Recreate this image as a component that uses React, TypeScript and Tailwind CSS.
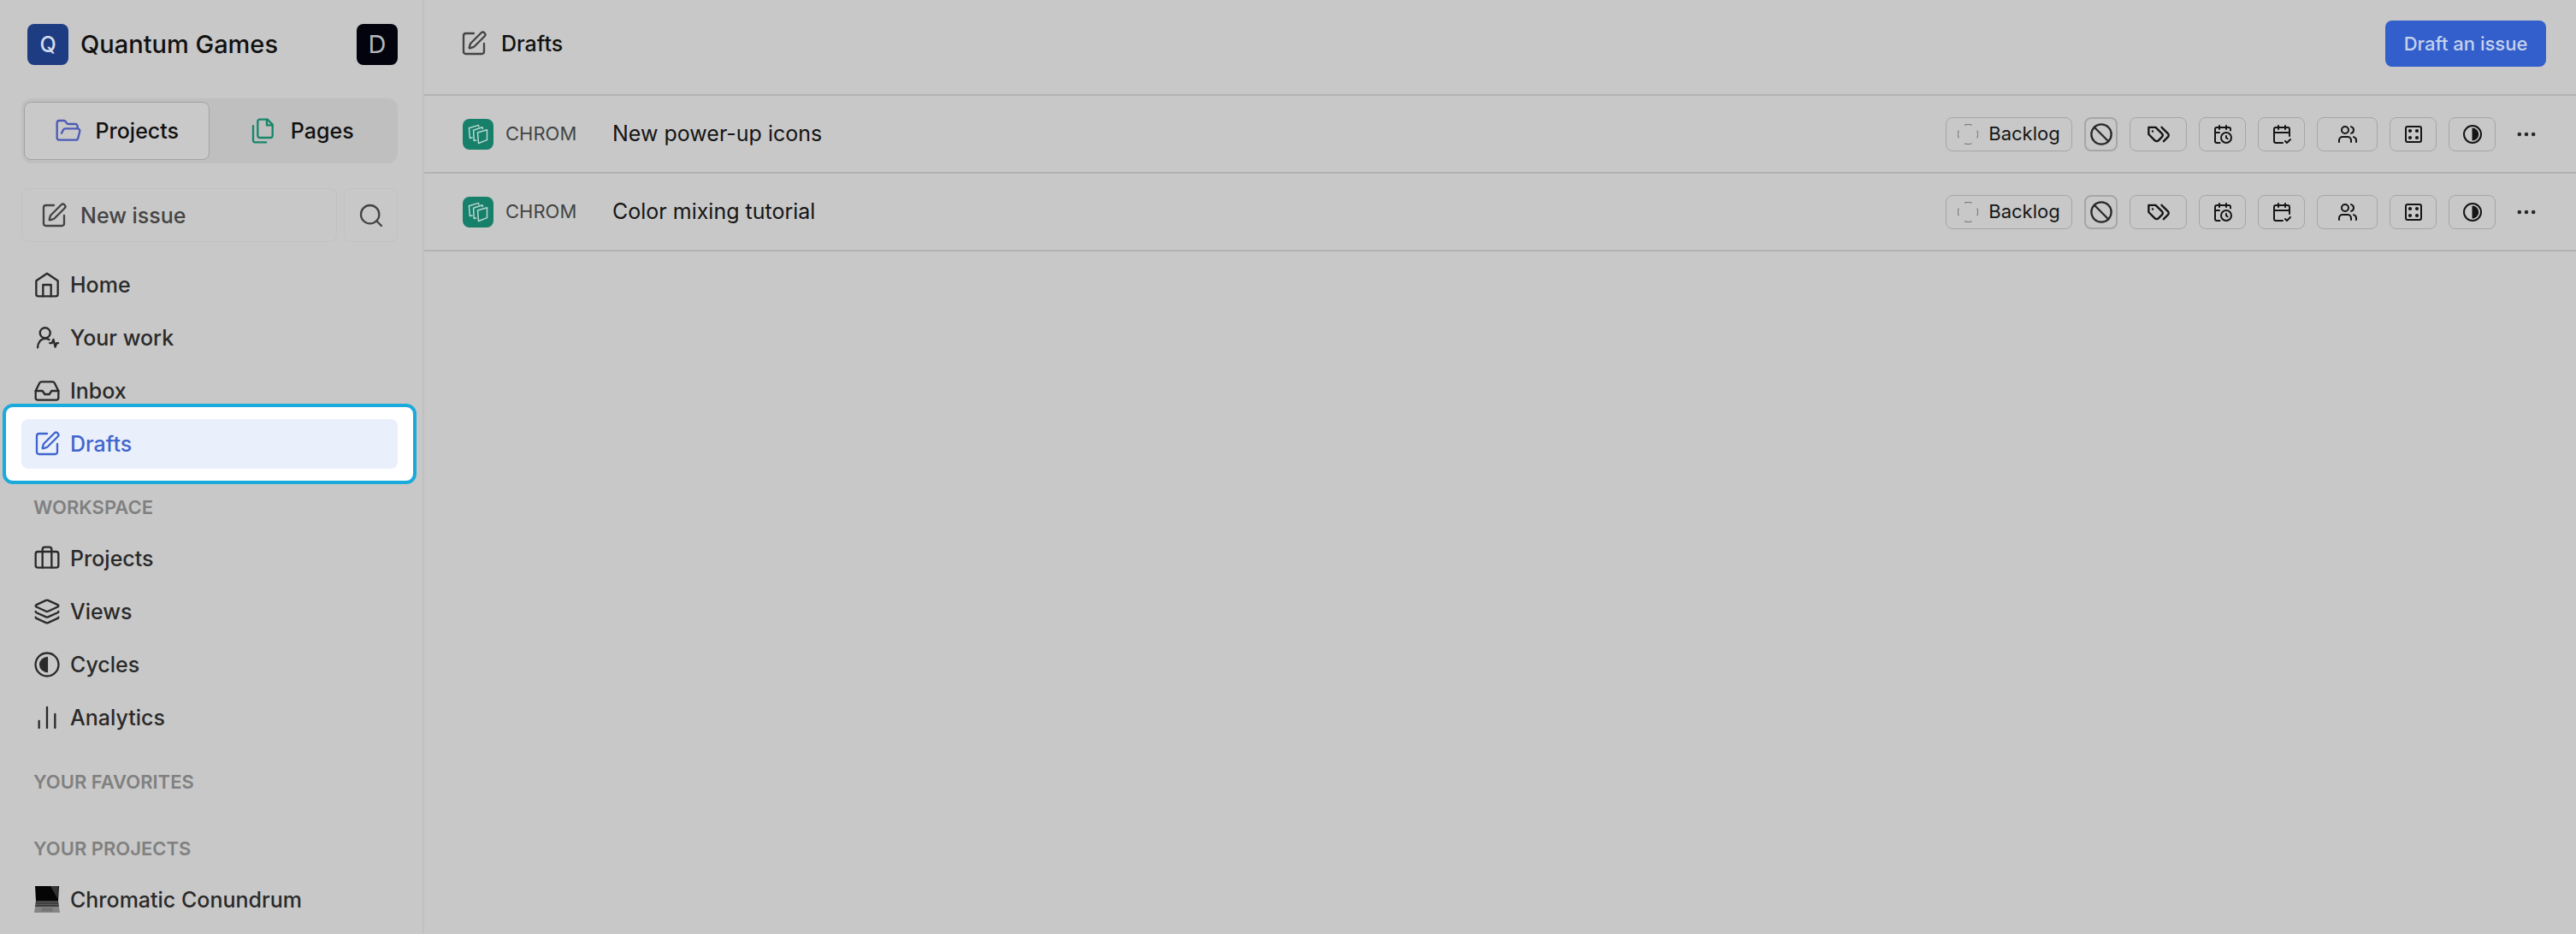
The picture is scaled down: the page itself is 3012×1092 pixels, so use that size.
import type { ReactNode } from 'react';
import {
  Ban,
  Briefcase,
  CalendarCheck2,
  CalendarClock,
  ChartNoAxesColumn,
  Ellipsis,
  FolderOpen,
  Inbox,
  Layers,
  Search,
  SquarePen,
  Users,
} from 'lucide-react';

const strokeProps = {
  viewBox: '0 0 24 24',
  fill: 'none',
  stroke: 'currentColor',
  strokeLinecap: 'round' as const,
  strokeLinejoin: 'round' as const,
};

const HomeIcon = () => (
  <svg {...strokeProps} strokeWidth={1.75} className="size-8">
    <path d="m2.500 8.500 9.500-6.500 9.500 6.500V20a2 2 0 0 1-2 2h-15a2 2 0 0 1-2-2z" />
    <path d="M8.500 22V12h7v10" />
  </svg>
);

const UserActivityIcon = () => (
  <svg {...strokeProps} strokeWidth={1.75} className="size-8">
    <circle cx="10.3" cy="7.7" r="4.500" />
    <path d="M3.800 20.500c0-4 2.600-7.800 6.500-7.800 1.400 0 2.600.3 3.600.9" />
    <path d="M14.400 16.600h1.900l1.300-3.200 1.600 6.600 1.200-3.400h1.400" />
  </svg>
);

const PagesIcon = () => (
  <svg {...strokeProps} strokeWidth={1.75} className="size-8 text-[#17876a]">
    <path d="M15.5 2H8.6c-.4 0-.8.2-1.1.5-.3.3-.5.7-.5 1.1v12.8c0 .4.2.8.5 1.1.3.3.7.5 1.1.5h9.8c.4 0 .8-.2 1.1-.5.3-.3.5-.7.5-1.1V6.5L15.5 2z" />
    <path d="M3 7.6v12.8c0 .4.2.8.5 1.1.3.3.7.5 1.1.5h9.8" />
    <path d="M15 2v5h5" />
  </svg>
);

const CycleIcon = () => (
  <svg {...strokeProps} strokeWidth={1.75} className="size-8">
    <circle cx="12" cy="12" r="10.1" />
    <path d="M12.800 5v14a7.600 7 0 0 1 0-14z" fill="currentColor" stroke="none" />
  </svg>
);

const CycleSmallIcon = () => (
  <svg {...strokeProps} strokeWidth={2} className="size-6">
    <circle cx="12" cy="12" r="10" />
    <path d="M11.500 4.500a7.800 7.500 0 0 1 0 15z" fill="currentColor" stroke="none" />
  </svg>
);

const TagsIcon = () => (
  <svg {...strokeProps} strokeWidth={2} className="size-7">
    <path d="M9 5H2v7l6.290 6.290c.940.940 2.480.940 3.420 0l3.580-3.580c.940-.940.940-2.480 0-3.420L9 5Z" />
    <path d="M6 9.010V9" />
    <path d="m15 5 6.300 6.300a2.400 2.400 0 0 1 0 3.400L17 19" />
  </svg>
);

const ModuleIcon = () => (
  <svg {...strokeProps} strokeWidth={2} className="size-6">
    <rect x="3" y="3" width="18" height="18" rx="2" />
    <g fill="currentColor" stroke="none">
      <circle cx="8" cy="8" r="2.1" />
      <circle cx="16" cy="8" r="2.1" />
      <circle cx="8" cy="16" r="2.1" />
      <circle cx="16" cy="16" r="2.1" />
    </g>
  </svg>
);

const BacklogIcon = () => (
  <svg viewBox="0 0 24 24" fill="none" stroke="#7d7d7d" strokeWidth={1.2} className="size-6">
    <path d="M8 1.200a11.500 11.500 0 0 1 8.600 0M8 22.800a11.500 11.500 0 0 0 8.600 0M1.200 7.700a11.500 11.500 0 0 0 0 8.600M22.800 7.700a11.500 11.500 0 0 1 0 8.600" />
  </svg>
);

const ProjectLogo = () => (
  <span className="flex size-9 shrink-0 items-center justify-center rounded-lg bg-[#17806b]">
    <svg viewBox="0 0 24 24" fill="none" stroke="#b9d8d0" strokeWidth={1.5} strokeLinejoin="round" className="size-6">
      <path d="m11.500 10 11-3.200v11.800l-10 3.900z" />
      <path d="M10.300 18.800 7.200 19.400 6.600 7.200 17 3.800l.5 2.400" />
      <path d="M5.600 15.800 2.400 16.400 1.400 4.800 12.400 1.400l.6 2.200" />
    </svg>
  </span>
);

const LaptopIcon = () => (
  <svg viewBox="0 0 32 32" className="size-8">
    <path d="M2 0h28l-1 17H3z" fill="#050505" />
    <path d="M20 0h9l-.5 15z" fill="#333" />
    <path d="M3 17h26l1 7H2z" fill="#3d3d3d" />
    <path d="M4 19h24M3 21.500h26" stroke="#777" strokeWidth=".8" strokeDasharray="1.5 .7" />
    <path d="M2 24h28l1 7H1z" fill="#858585" />
    <path d="M10 25h12l1 4.500H9z" fill="#757575" />
  </svg>
);

interface NavItem {
  label: string;
  icon: ReactNode;
  active?: boolean;
}

const mainNav: NavItem[] = [
  { label: 'Home', icon: <HomeIcon /> },
  { label: 'Your work', icon: <UserActivityIcon /> },
  { label: 'Inbox', icon: <Inbox className="size-8" strokeWidth={1.75} /> },
  { label: 'Drafts', icon: <SquarePen className="size-8" strokeWidth={1.75} />, active: true },
];

const workspaceNav: NavItem[] = [
  { label: 'Projects', icon: <Briefcase className="size-8" strokeWidth={1.75} /> },
  { label: 'Views', icon: <Layers className="size-8" strokeWidth={1.75} /> },
  { label: 'Cycles', icon: <CycleIcon /> },
  { label: 'Analytics', icon: <ChartNoAxesColumn className="size-8" strokeWidth={1.75} /> },
];

const projectNav: NavItem[] = [{ label: 'Chromatic Conundrum', icon: <LaptopIcon /> }];

const drafts = [
  { id: 1, project: 'CHROM', title: 'New power-up icons' },
  { id: 2, project: 'CHROM', title: 'Color mixing tutorial' },
];

const NavList = ({ items }: { items: NavItem[] }) => (
  <ul className="flex flex-col gap-1">
    {items.map((item) => (
      <li key={item.label} className="relative">
        {/* Spotlight around the current step of the tour */}
        {item.active && (
          <div className="absolute -inset-x-[22px] -inset-y-[18px] rounded-xl border-4 border-[#1aaadb] bg-white" />
        )}
        <a
          href="#"
          className={
            item.active
              ? 'relative flex h-[58px] items-center gap-[11px] rounded-lg bg-[#eaeffc] px-3.5 text-[#3f66cc]'
              : 'flex h-[58px] items-center gap-[11px] rounded-lg px-3.5 text-[#2a2a2a]'
          }
        >
          {item.icon}
          <span>{item.label}</span>
        </a>
      </li>
    ))}
  </ul>
);

const SectionTitle = ({ children }: { children: ReactNode }) => (
  <h2 className="px-3.5 text-[22px] leading-8 font-semibold text-[#808080]">{children}</h2>
);

const Sidebar = () => (
  <aside className="w-[496px] shrink-0 border-r-2 border-[#c0c0c0] pr-[29px] pb-2.5 pl-[25px] text-[25px] leading-9 font-medium">
    <div className="flex items-center gap-3.5 pt-7 pl-[7px]">
      <span className="flex size-12 items-center justify-center rounded-lg bg-[#1e3c82] text-[25px] text-[#d4dcec]">
        Q
      </span>
      <span className="flex-1 text-[29px] text-[#111]">Quantum Games</span>
      <button
        type="button"
        aria-label="Account"
        className="flex size-12 items-center justify-center rounded-lg bg-[#02030c] text-[29px] font-normal text-[#b4b6bc]"
      >
        D
      </button>
    </div>

    <div className="mt-[39px] flex h-[76px] rounded-xl bg-[#bfbfbf] p-1 pl-[3px] text-[#111]">
      <button
        type="button"
        className="flex w-1/2 items-center justify-center gap-4 rounded-lg border border-[#a3a3a3] bg-[#c9c9c9]"
      >
        <FolderOpen className="size-8 text-[#4c5bb8]" strokeWidth={1.75} />
        Projects
      </button>
      <button type="button" className="flex w-1/2 items-center justify-center gap-4">
        <PagesIcon />
        Pages
      </button>
    </div>

    <div className="mt-[29px] flex gap-2 text-[#444]">
      <button
        type="button"
        className="flex h-[63px] flex-1 items-center gap-[15px] rounded-lg border border-[#c2c2c2] px-[21px]"
      >
        <SquarePen className="size-8" strokeWidth={1.75} />
        New issue
      </button>
      <button
        type="button"
        aria-label="Search"
        className="flex size-[63px] items-center justify-center rounded-lg border border-[#c2c2c2]"
      >
        <Search className="size-8" strokeWidth={1.75} />
      </button>
    </div>

    <nav>
      <div className="pt-[21px]">
        <NavList items={mainNav} />
      </div>
      <div className="pt-[29px]">
        <SectionTitle>WORKSPACE</SectionTitle>
        <div className="pt-[15px]">
          <NavList items={workspaceNav} />
        </div>
      </div>
      <div className="pt-[30px]">
        <SectionTitle>YOUR FAVORITES</SectionTitle>
      </div>
      <div className="pt-[46px]">
        <SectionTitle>YOUR PROJECTS</SectionTitle>
        <div className="pt-[15px]">
          <NavList items={projectNav} />
        </div>
      </div>
    </nav>
  </aside>
);

interface PropertyButtonProps {
  label: string;
  className: string;
  children: ReactNode;
}

const PropertyButton = ({ label, className, children }: PropertyButtonProps) => (
  <button
    type="button"
    aria-label={label}
    className={`flex h-10 items-center justify-center rounded-lg border-[#a6a6a6] ${className}`}
  >
    {children}
  </button>
);

const DraftRow = ({ project, title }: { project: string; title: string }) => (
  <li className="flex h-[91px] items-center border-b-2 border-[#b2b2b2] pr-9 pl-[45px]">
    <ProjectLogo />
    <span className="w-[139px] pl-3.5 text-[22px] text-[#444]">{project}</span>
    <span className="flex-1 text-[25px] text-[#151515]">{title}</span>
    <div className="flex items-center gap-3.5 text-[#151515]">
      <PropertyButton label="State: Backlog" className="w-[148px] gap-3 border text-[22px]">
        <BacklogIcon />
        Backlog
      </PropertyButton>
      <PropertyButton label="Priority" className="w-[39px] border-2 text-[#2a2a2a]">
        <Ban className="size-7 shrink-0" strokeWidth={2} />
      </PropertyButton>
      <PropertyButton label="Labels" className="w-[67px] border">
        <TagsIcon />
      </PropertyButton>
      <PropertyButton label="Start date" className="w-[55px] border">
        <CalendarClock className="size-6" strokeWidth={2} />
      </PropertyButton>
      <PropertyButton label="Due date" className="w-[55px] border">
        <CalendarCheck2 className="size-6" strokeWidth={2} />
      </PropertyButton>
      <PropertyButton label="Assignees" className="w-[71px] border">
        <Users className="size-6" strokeWidth={2} />
      </PropertyButton>
      <PropertyButton label="Modules" className="w-[55px] border">
        <ModuleIcon />
      </PropertyButton>
      <PropertyButton label="Cycle" className="w-[55px] border">
        <CycleSmallIcon />
      </PropertyButton>
      <button type="button" aria-label="More" className="flex h-10 w-11 items-center justify-center text-[#2a2a2a]">
        <Ellipsis className="size-7" strokeWidth={2} />
      </button>
    </div>
  </li>
);

export default function App() {
  return (
    <div className="flex min-h-screen bg-[#c8c8c8] font-['Inter',sans-serif]">
      <Sidebar />
      <main className="min-w-0 flex-1">
        <header className="flex items-center gap-4 border-b-2 border-[#b2b2b2] pt-6 pr-[35px] pb-8 pl-[42px]">
          <SquarePen className="size-8 text-[#444]" strokeWidth={1.75} />
          <h1 className="flex-1 text-[25px] leading-9 font-medium text-[#111]">Drafts</h1>
          <button
            type="button"
            className="h-[54px] w-[188px] rounded-lg bg-[#325fcb] text-[22px] font-medium text-[#c6d2ee]"
          >
            Draft an issue
          </button>
        </header>
        <ul>
          {drafts.map((draft) => (
            <DraftRow key={draft.id} project={draft.project} title={draft.title} />
          ))}
        </ul>
      </main>
    </div>
  );
}
